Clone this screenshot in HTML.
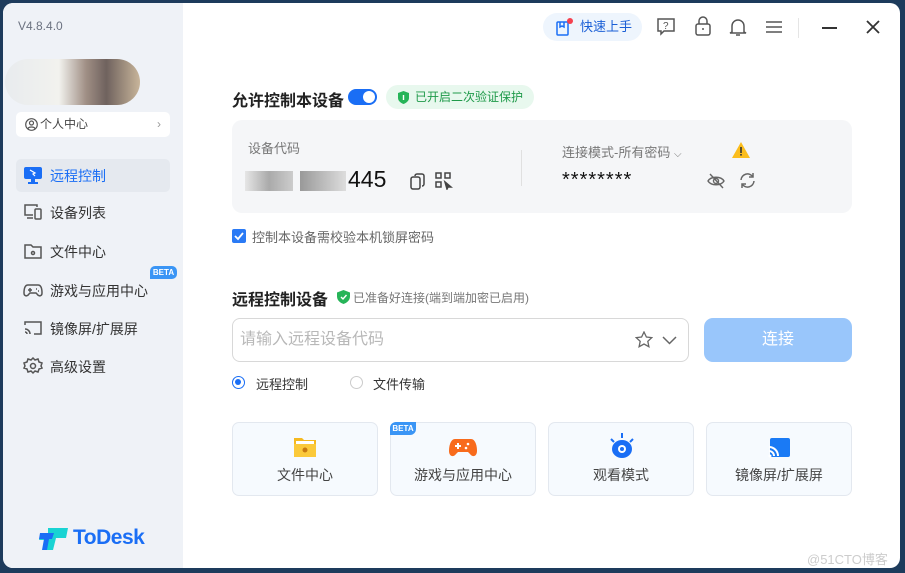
<!DOCTYPE html>
<html><head><meta charset="utf-8"><style>
*{margin:0;padding:0;box-sizing:border-box}
body{width:905px;height:573px;overflow:hidden;background:#1d3b5c;font-family:"Liberation Sans","Noto Sans CJK SC",sans-serif;position:relative}
.win{position:absolute;left:3px;top:3px;width:897px;height:565px;background:#fff;border-radius:10px;overflow:hidden}
.side{position:absolute;left:0;top:0;width:180px;height:565px;background:#eff2f7}
.abs{position:absolute}
.nav{position:absolute;left:13px;width:154px;height:33px;font-size:14px;color:#333;display:flex;align-items:center;padding-left:34px;border-radius:5px}
.nav svg{position:absolute;left:7px;top:7px}
.t{font-size:14px;color:#333}
.card{position:absolute;top:419px;width:146px;height:74px;border:1px solid #e3e8ef;border-radius:7px;background:#f6fafe;text-align:center;font-size:14px;color:#444}
.card span{position:absolute;left:0;right:0;top:42px}
</style></head><body>
<div class="win">
<div class="side">
 <div class="abs" style="left:15px;top:16px;font-size:12px;color:#6b7280">V4.8.4.0</div>
 <div class="abs" style="left:2px;top:56px;width:135px;height:46px;border-radius:23px;background:linear-gradient(90deg,#e8ebee,#f2f2ee 40%,#a08f85 60%,#6f625e 75%,#c8b59a)"></div>
 <div class="abs" style="left:13px;top:109px;width:154px;height:25px;background:#fff;border-radius:5px;font-size:12px;color:#444;line-height:25px;padding-left:24px">个人中心<span style="position:absolute;right:9px;color:#999">›</span>
  <svg style="position:absolute;left:9px;top:6px" width="13" height="13" viewBox="0 0 13 13" fill="none" stroke="#555" stroke-width="1.2"><circle cx="6.5" cy="6.5" r="5.8"/><circle cx="6.5" cy="5" r="2"/><path d="M3 10.5c1-2 6-2 7 0"/></svg></div>
 <div class="nav" style="top:156px;background:#e5e9ef;color:#1a6ef5">远程控制<svg width="20" height="18"><rect x="1" y="1" width="18" height="12" rx="2" fill="#1a6ef5"/><rect x="8" y="13" width="4" height="3" fill="#1a6ef5"/><rect x="5" y="16" width="10" height="2" fill="#1a6ef5"/><path d="M7 4l5 3-2 1 2 2" stroke="#fff" stroke-width="1.2" fill="none"/></svg></div>
 <div class="nav" style="top:193px">设备列表<svg width="20" height="18" fill="none" stroke="#555" stroke-width="1.5"><path d="M14 4V2H2v10h8"/><rect x="12" y="6" width="6" height="10" rx="1"/><path d="M4 15h6"/></svg></div>
 <div class="nav" style="top:232px">文件中心<svg width="20" height="18" fill="none" stroke="#555" stroke-width="1.5"><path d="M2 3h6l2 2h8v11H2z"/><circle cx="10" cy="11" r="1.5"/></svg></div>
 <div class="nav" style="top:271px">游戏与应用中心<svg width="20" height="18" fill="none" stroke="#555" stroke-width="1.5"><path d="M5 4h10c3 0 4 4 4 8 0 3-3 4-5 1l-1-1H7l-1 1c-2 3-5 2-5-1 0-4 1-8 4-8z"/><path d="M5 9h4M7 7v4M13 8h1M15 10h1"/></svg></div>
 <div class="abs" style="left:147px;top:263px;width:27px;height:13px;background:#3a95f5;border-radius:5px 5px 5px 0;color:#fff;font-size:8px;font-weight:bold;text-align:center;line-height:13px">BETA</div>
 <div class="nav" style="top:309px">镜像屏/扩展屏<svg width="20" height="18" fill="none" stroke="#555" stroke-width="1.5"><path d="M2 6V3h16v12h-7"/><path d="M2 10a5 5 0 015 5M2 13a2 2 0 012 2"/></svg></div>
 <div class="nav" style="top:347px">高级设置<svg width="20" height="18" fill="none" stroke="#555" stroke-width="1.5"><circle cx="10" cy="9" r="2.5"/><path d="M10 1l2 2 3-1 1 3 3 1-1 3 1 2-3 1-1 3-3-1-2 2-2-2-3 1-1-3-3-1 1-2-1-3 3-1 1-3 3 1z"/></svg></div>
 <svg class="abs" style="left:35px;top:522px" width="32" height="26"><path d="M10 3h20l-2 10H18l-3 12H8l2-10H1l2-7h7z" fill="#19d3d3"/><path d="M2 8h14l-2 6h-3l-2 11H4l2-11H1z" fill="#1a6ef5"/></svg>
 <div class="abs" style="left:70px;top:523px;font-size:21px;font-weight:bold;color:#1a6ef5;letter-spacing:-0.5px">ToDesk</div>
</div>
<div class="abs" style="left:540px;top:10px;width:99px;height:28px;border-radius:14px;background:#eef5fd;font-size:13px;color:#1a5fd6;line-height:28px;padding-left:37px">快速上手
 <svg style="position:absolute;left:12px;top:6px" width="16" height="17" fill="none" stroke="#1a6ef5" stroke-width="1.5"><rect x="2" y="3" width="11" height="13" rx="1"/><path d="M5 3v5l2-1 2 1V3"/></svg>
 <div style="position:absolute;left:24px;top:5px;width:6px;height:6px;border-radius:50%;background:#f5414f"></div></div>
<svg class="abs" style="left:654px;top:15px" width="18" height="18" fill="none" stroke="#555" stroke-width="1.5"><path d="M1 1h16v12H7l-3 3v-3H1z"/><text x="6" y="11" font-size="10" fill="#555" stroke="none" font-family="Liberation Sans">?</text></svg>
<svg class="abs" style="left:692px;top:13px" width="16" height="20" fill="none" stroke="#555" stroke-width="1.5"><rect x="1" y="8" width="14" height="11" rx="2"/><path d="M4 8V5a4 4 0 018 0v3M8 12v2"/></svg>
<svg class="abs" style="left:726px;top:14px" width="18" height="20" fill="none" stroke="#555" stroke-width="1.5"><path d="M3 15V9a6 6 0 0112 0v6l2 1H1z M7 18h4"/></svg>
<svg class="abs" style="left:763px;top:17px" width="16" height="14" stroke="#555" stroke-width="1.5"><path d="M0 2h16M0 7h16M0 12h16"/></svg>
<div class="abs" style="left:795px;top:15px;width:1px;height:20px;background:#e5e5e5"></div>
<div class="abs" style="left:819px;top:24px;width:15px;height:2px;background:#333"></div>
<svg class="abs" style="left:863px;top:17px" width="14" height="14" stroke="#333" stroke-width="1.8"><path d="M1 1l12 12M13 1L1 13"/></svg>
<div class="abs" style="left:229px;top:84px;font-size:16px;font-weight:bold;color:#222">允许控制本设备</div>
<div class="abs" style="left:345px;top:86px;width:29px;height:16px;border-radius:8px;background:#1a6ef5"><div style="position:absolute;right:2px;top:2px;width:12px;height:12px;border-radius:50%;background:#fff"></div></div>
<div class="abs" style="left:383px;top:82px;width:148px;height:24px;border-radius:12px;background:#e8f8ee;font-size:12px;color:#1f9a4a;line-height:24px;padding-left:29px">已开启二次验证保护
 <svg style="position:absolute;left:12px;top:6px" width="11" height="13"><path d="M5.5 0L11 2v5c0 3-3 5-5.5 6C3 12 0 10 0 7V2z" fill="#26b458"/><rect x="4.8" y="4" width="1.4" height="5" fill="#fff"/></svg></div>
<div class="abs" style="left:229px;top:117px;width:620px;height:93px;border-radius:10px;background:#f5f6f8"></div>
<div class="abs t" style="left:245px;top:135px;font-size:13px;color:#777">设备代码</div>
<div class="abs" style="left:242px;top:168px;width:48px;height:20px;background:linear-gradient(90deg,#e6e6e6,#aaa,#ccc)"></div>
<div class="abs" style="left:297px;top:168px;width:46px;height:20px;background:linear-gradient(90deg,#999,#bbb,#ddd)"></div>
<div class="abs" style="left:345px;top:163px;font-size:23px;color:#111">445</div>
<svg class="abs" style="left:407px;top:170px" width="16" height="17" fill="none" stroke="#444" stroke-width="1.5"><rect x="1" y="4" width="9" height="12" rx="2"/><path d="M5 3a2 2 0 012-2h5a2 2 0 012 2v8a2 2 0 01-2 2"/></svg>
<svg class="abs" style="left:432px;top:169px" width="18" height="18" fill="none" stroke="#444" stroke-width="1.5"><rect x="1" y="1" width="5" height="5"/><rect x="10" y="1" width="5" height="5"/><rect x="1" y="10" width="5" height="5"/><path d="M10 10l6 5-3 0-1 2z" fill="#444"/></svg>
<div class="abs" style="left:518px;top:147px;width:1px;height:36px;background:#e0e0e0"></div>
<div class="abs" style="left:559px;top:139px;font-size:13px;color:#777">连接模式-所有密码 <span style="font-size:10px">⌵</span></div>
<svg class="abs" style="left:729px;top:139px" width="18" height="16"><path d="M9 0l9 16H0z" fill="#fbbd1d"/><rect x="8.2" y="5" width="1.6" height="6" fill="#333"/><rect x="8.2" y="12" width="1.6" height="1.6" fill="#333"/></svg>
<div class="abs" style="left:559px;top:166px;font-size:20px;color:#111;letter-spacing:1px">********</div>
<svg class="abs" style="left:704px;top:169px" width="18" height="18" fill="none" stroke="#666" stroke-width="1.4"><path d="M1 9c3-5 13-5 16 0-3 5-13 5-16 0z"/><circle cx="9" cy="9" r="2.5"/><path d="M3 2l13 14"/></svg>
<svg class="abs" style="left:736px;top:169px" width="17" height="17" fill="none" stroke="#666" stroke-width="1.5"><path d="M2 8a6.5 6.5 0 0112-3M15 9a6.5 6.5 0 01-12 3"/><path d="M14 1v4h-4M3 16v-4h4"/></svg>
<div class="abs" style="left:229px;top:226px;width:14px;height:14px;border-radius:2px;background:#2a7af5"><svg width="14" height="14" fill="none" stroke="#fff" stroke-width="1.8"><path d="M3 7l3 3 5-6"/></svg></div>
<div class="abs" style="left:249px;top:224px;font-size:13px;color:#666">控制本设备需校验本机锁屏密码</div>
<div class="abs" style="left:229px;top:283px;font-size:16px;font-weight:bold;color:#222">远程控制设备</div>
<svg class="abs" style="left:334px;top:287px" width="13" height="14"><path d="M6.5 0L13 2.5v4c0 4-3.5 6.5-6.5 7.5C3.5 13 0 10.5 0 6.5v-4z" fill="#26b458"/><path d="M4 7l2 2 3.5-4" stroke="#fff" stroke-width="1.4" fill="none"/></svg>
<div class="abs" style="left:350px;top:286px;font-size:12px;color:#777">已准备好连接(端到端加密已启用)</div>
<div class="abs" style="left:229px;top:315px;width:457px;height:44px;border:1px solid #d8d8d8;border-radius:8px;font-size:16px;color:#b8b8b8;line-height:42px;padding-left:7px">请输入远程设备代码</div>
<svg class="abs" style="left:632px;top:328px" width="18" height="18" fill="none" stroke="#666" stroke-width="1.3"><path d="M9 1l2.4 5 5.4.6-4 3.7 1.1 5.4L9 13l-4.9 2.7 1.1-5.4-4-3.7 5.4-.6z"/></svg>
<svg class="abs" style="left:659px;top:333px" width="15" height="9" fill="none" stroke="#666" stroke-width="1.5"><path d="M1 1l6.5 6.5L14 1"/></svg>
<div class="abs" style="left:701px;top:315px;width:148px;height:44px;border-radius:9px;background:#99c6fb;color:#fff;font-size:16px;text-align:center;line-height:44px">连接</div>
<div class="abs" style="left:229px;top:373px;width:13px;height:13px;border-radius:50%;border:1.5px solid #1a6ef5"><div style="margin:2px;width:6px;height:6px;border-radius:50%;background:#1a6ef5"></div></div>
<div class="abs" style="left:253px;top:371px;font-size:13px;color:#333">远程控制</div>
<div class="abs" style="left:347px;top:373px;width:13px;height:13px;border-radius:50%;border:1px solid #ccc"></div>
<div class="abs" style="left:370px;top:371px;font-size:13px;color:#333">文件传输</div>
<div class="card" style="left:229px"><svg style="position:absolute;left:60px;top:13px" width="24" height="22"><path d="M1 2h8l2 2h12v17H1z" fill="#f5b920"/><rect x="3" y="5" width="18" height="3" fill="#fff"/><path d="M1 8h22v13H1z" fill="#fbc93a"/><circle cx="12" cy="14" r="2.5" fill="#c77a10"/></svg><span>文件中心</span></div>
<div class="card" style="left:387px"><svg style="position:absolute;left:58px;top:15px" width="28" height="20"><path d="M6 1h16c4 0 6 6 6 12 0 5-4 7-7 3l-2-2H9l-2 2c-3 4-7 2-7-3C0 7 2 1 6 1z" fill="#f86b1c"/><path d="M6 8h6M9 5v6" stroke="#fff" stroke-width="2"/><circle cx="19" cy="6" r="1.3" fill="#fff"/><circle cx="17" cy="10" r="1.3" fill="#fff"/></svg><span>游戏与应用中心</span></div>
<div class="abs" style="left:387px;top:419px;width:26px;height:13px;background:#3a95f5;border-radius:6px 0 6px 0;color:#fff;font-size:8px;font-weight:bold;text-align:center;line-height:13px">BETA</div>
<div class="card" style="left:545px"><svg style="position:absolute;left:59px;top:10px" width="28" height="26"><path d="M14 0v5M3 6l3 3M25 6l-3 3" stroke="#1a6ef5" stroke-width="2"/><ellipse cx="14" cy="16" rx="10" ry="9" fill="#1a6ef5"/><circle cx="14" cy="16" r="4" fill="#fff"/><circle cx="14" cy="16" r="2" fill="#1a6ef5"/></svg><span>观看模式</span></div>
<div class="card" style="left:703px"><svg style="position:absolute;left:61px;top:15px" width="22" height="20"><rect x="2" y="0" width="20" height="19" rx="2" fill="#1a7af5"/><path d="M1 9a9 9 0 019 9M1 13a5 5 0 015 5" stroke="#fff" stroke-width="2" fill="none"/><circle cx="2" cy="18" r="1.5" fill="#fff"/></svg><span>镜像屏/扩展屏</span></div>
<div class="abs" style="left:804px;top:546px;font-size:13px;color:#ccc">@51CTO博客</div>
</div>
</body></html>
